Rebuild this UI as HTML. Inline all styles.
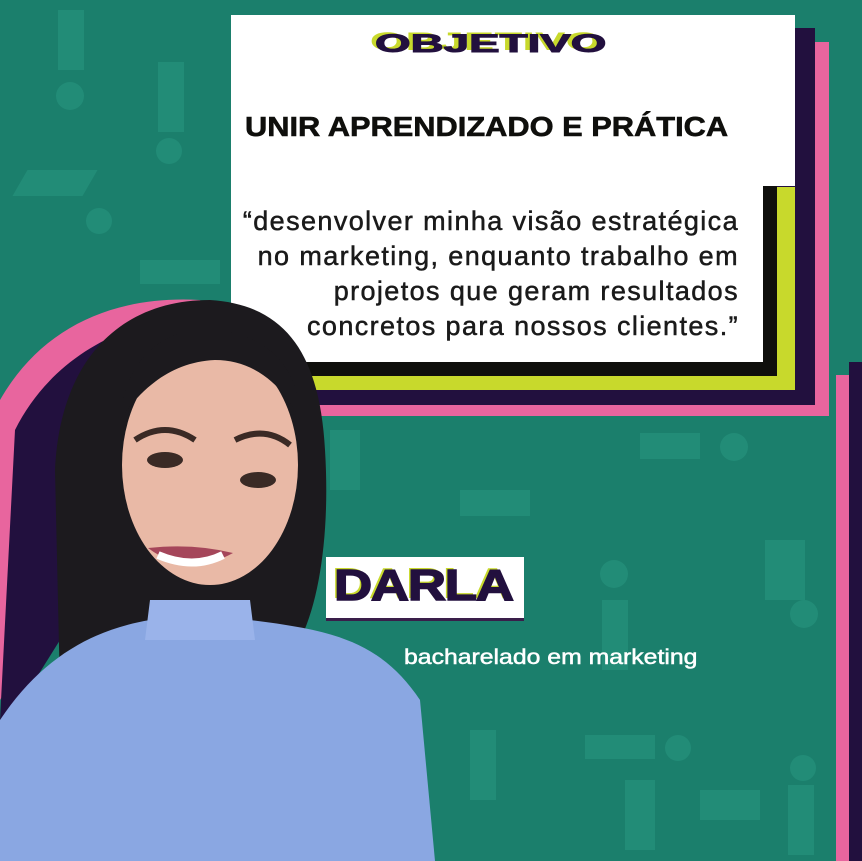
<!DOCTYPE html>
<html><head><meta charset="utf-8"><style>
body{margin:0;width:862px;height:861px;overflow:hidden;background:#1b7f6c;position:relative;font-family:"Liberation Sans",sans-serif}
.a{position:absolute}
.pat{position:absolute;background:#24907a;opacity:.8}
.s{transform-origin:left top;white-space:nowrap}
</style></head><body>
<div class="pat" style="left:58px;top:10px;width:26px;height:60px"></div>
<div class="pat" style="left:56px;top:82px;width:28px;height:28px;border-radius:50%"></div>
<div class="pat" style="left:158px;top:62px;width:26px;height:70px"></div>
<div class="pat" style="left:156px;top:138px;width:26px;height:26px;border-radius:50%"></div>
<div class="pat" style="left:20px;top:170px;width:70px;height:26px;transform:skewX(-30deg)"></div>
<div class="pat" style="left:86px;top:208px;width:26px;height:26px;border-radius:50%"></div>
<div class="pat" style="left:140px;top:260px;width:80px;height:24px"></div>
<div class="pat" style="left:640px;top:433px;width:60px;height:26px"></div>
<div class="pat" style="left:720px;top:433px;width:28px;height:28px;border-radius:50%"></div>
<div class="pat" style="left:330px;top:430px;width:30px;height:60px"></div>
<div class="pat" style="left:460px;top:490px;width:70px;height:26px"></div>
<div class="pat" style="left:600px;top:560px;width:28px;height:28px;border-radius:50%"></div>
<div class="pat" style="left:602px;top:600px;width:26px;height:70px"></div>
<div class="pat" style="left:765px;top:540px;width:40px;height:60px"></div>
<div class="pat" style="left:790px;top:600px;width:28px;height:28px;border-radius:50%"></div>
<div class="pat" style="left:470px;top:730px;width:26px;height:70px"></div>
<div class="pat" style="left:625px;top:780px;width:30px;height:70px"></div>
<div class="pat" style="left:585px;top:735px;width:70px;height:24px"></div>
<div class="pat" style="left:665px;top:735px;width:26px;height:26px;border-radius:50%"></div>
<div class="pat" style="left:700px;top:790px;width:60px;height:30px"></div>
<div class="pat" style="left:790px;top:755px;width:26px;height:26px;border-radius:50%"></div>
<div class="pat" style="left:788px;top:785px;width:26px;height:70px"></div>

<div class="a" style="left:245px;top:42px;width:584px;height:374px;background:#e8659e"></div>
<div class="a" style="left:238px;top:28px;width:577px;height:377px;background:#22103e"></div>
<div class="a" style="left:300px;top:187px;width:495px;height:203px;background:#c8d92c"></div>
<div class="a" style="left:300px;top:186px;width:477px;height:190px;background:#0f0f0c"></div>
<div class="a" style="left:231px;top:15px;width:564px;height:171px;background:#fff"></div>
<div class="a" style="left:231px;top:186px;width:532px;height:176px;background:#fff"></div>
<div class="a s" style="left:375px;top:29px;font:900 26px 'Liberation Sans';color:#22103e;text-shadow:-3px -2px 0 #c8d92c;-webkit-text-stroke:1px #22103e;transform:scale(1.76,0.95)">OBJETIVO</div>
<div class="a s" style="left:245px;top:111px;font:bold 28px 'Liberation Sans';color:#0f0f0c;-webkit-text-stroke:0.6px #0f0f0c;transform:scaleX(1.1)">UNIR APRENDIZADO E PRÁTICA</div>
<div class="a" style="left:200px;top:204px;width:539px;text-align:right;font:27px/35px 'Liberation Sans';color:#1a1a1a;letter-spacing:1.4px;-webkit-text-stroke:0.5px #1a1a1a;white-space:nowrap">“desenvolver minha visão estratégica<br>no marketing, enquanto trabalho em<br>projetos que geram resultados<br>concretos para nossos clientes.”</div>

<div class="a" style="left:836px;top:375px;width:26px;height:486px;background:#e8659e"></div>
<div class="a" style="left:849px;top:362px;width:13px;height:499px;background:#22103e"></div>

<svg class="a" style="left:0;top:0" width="862" height="861">
<path d="M0 400 C40 330 110 295 200 300 L230 330 L160 360 L60 600 L0 700Z" fill="#e8659e"/>
<path d="M15 430 C50 360 120 320 200 315 L230 340 L140 420 L60 640 L10 720 L0 720Z" fill="#22103e"/>
<path d="M55 470 C60 360 120 300 210 300 C290 305 320 360 325 450 C330 530 320 600 300 640 L60 690Z" fill="#1c1a1e"/>
<ellipse cx="210" cy="465" rx="88" ry="120" fill="#e9b9a6"/>
<path d="M120 420 C125 350 175 325 215 330 C270 335 300 370 300 420 C280 380 250 360 215 360 C170 362 140 390 120 420Z" fill="#1c1a1e"/>
<path d="M135 440 q30 -20 60 0" stroke="#3a2a25" stroke-width="6" fill="none"/>
<path d="M235 440 q30 -15 55 5" stroke="#3a2a25" stroke-width="6" fill="none"/>
<ellipse cx="165" cy="460" rx="18" ry="8" fill="#3a2a25"/>
<ellipse cx="258" cy="480" rx="18" ry="8" fill="#3a2a25"/>
<path d="M148 548 q40 30 85 5 q-40 -10 -85 -5Z" fill="#a5465a"/>
<path d="M158 555 q35 15 65 0" stroke="#fff" stroke-width="8" fill="none"/>
<path d="M0 720 C40 660 90 630 150 620 L250 620 C330 630 380 640 420 700 L435 861 L0 861Z" fill="#8aa7e2"/>
<path d="M150 600 L250 600 L255 640 L145 640Z" fill="#9ab3ea"/>
</svg>

<div class="a" style="left:326px;top:557px;width:198px;height:61px;background:#fff;border-bottom:3px solid #3a1e4a"></div>
<div class="a s" style="left:334px;top:561px;font:900 44px 'Liberation Sans';color:#22103e;letter-spacing:-1px;-webkit-text-stroke:1.5px #22103e;text-shadow:-2px -2px 0 #c8d92c;transform:scaleX(1.2)">DARLA</div>
<div class="a s" style="left:404px;top:646px;font:21px 'Liberation Sans';color:#fff;-webkit-text-stroke:0.5px #fff;transform:scaleX(1.18)">bacharelado em marketing</div>
</body></html>
